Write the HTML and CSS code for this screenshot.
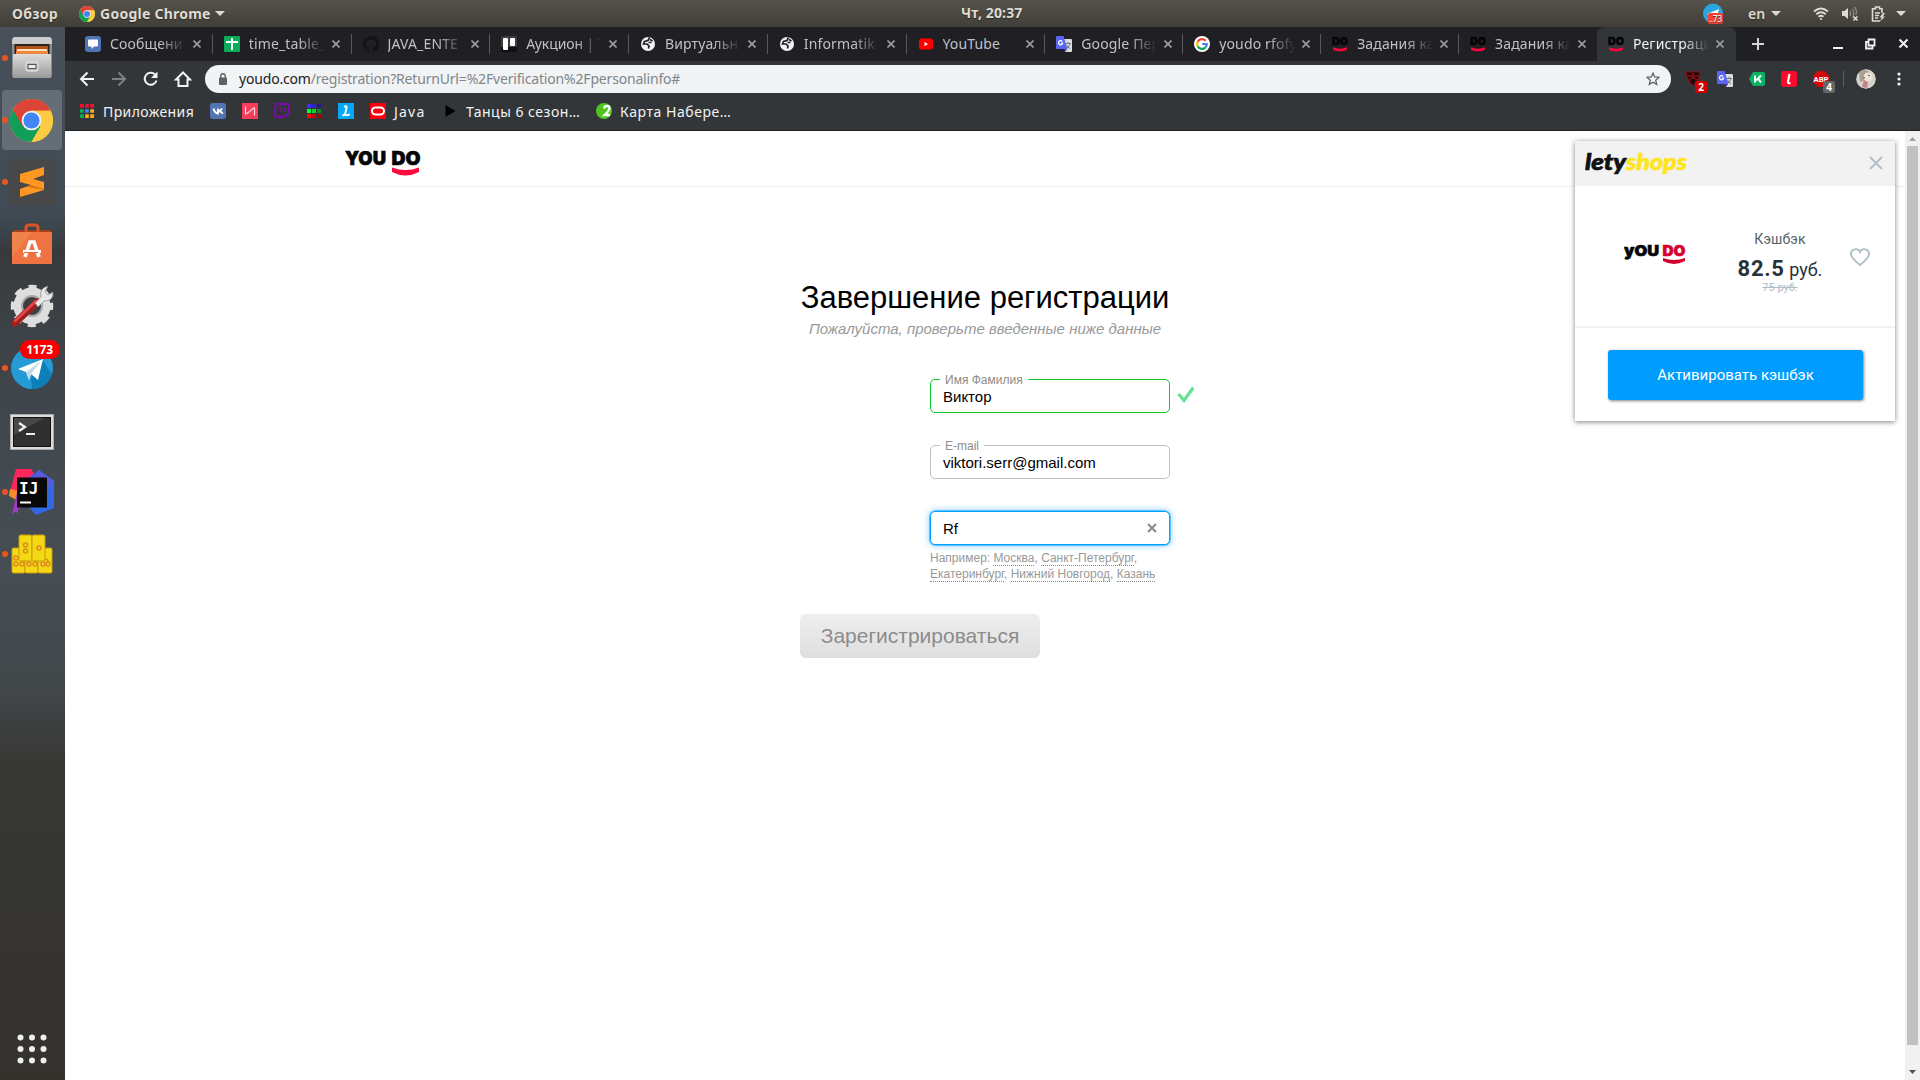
FILE: index.html
```html
<!DOCTYPE html>
<html lang="ru">
<head>
<meta charset="utf-8">
<title>Регистрация</title>
<link rel="stylesheet" href="styles.css">
</head>
<body>
<svg width="0" height="0" class="defs">
  <symbol id="chrome" viewBox="0 0 48 48">
    <circle cx="24" cy="24" r="24" fill="#fbc93c"/>
    <path d="M24 24 3.2 12A24 24 0 0 0 24 48L34.4 30z" fill="#119e58"/>
    <path d="M24 24V13H45.3A24 24 0 0 0 3.2 12L13.6 30z" fill="#db4437"/>
    <path d="M24 24 34.4 30 24 48A24 24 0 0 0 45.3 13H24z" fill="#fbcb42"/>
    <circle cx="24" cy="24" r="11" fill="#f3f3f3"/><circle cx="24" cy="24" r="9" fill="#4285f4"/>
  </symbol>
  <symbol id="close" viewBox="0 0 8 8"><path d="M.5.5l7 7M7.5.5l-7 7" stroke="currentColor" stroke-width="1.6"/></symbol>
  <symbol id="globe" viewBox="0 0 16 16"><circle cx="8" cy="8" r="7" fill="#f1f3f4"/><path d="M9.500 1.500 8 4.500 4.500 5.500 3.500 8H7l2 2-.5 2.500M10 3.500l2.500 1.500M8.500 6.500h3" stroke="#202024" stroke-width="1.700" fill="none"/></symbol>
  <symbol id="translate" viewBox="0 0 16 16"><path d="M7 3h8a1 1 0 0 1 1 1v11a1 1 0 0 1-1 1H9z" fill="#dadce0"/><path d="M9.5 7.5H15M12 6v1.5M14 8q-1 3-4 4.5M10.5 9q1 2.500 3.500 3.500" stroke="#6f7e86" fill="none"/><path d="M8 13h3l-2 3z" fill="#4527a0"/><path d="M1 0h6.500L11.500 13H1a1 1 0 0 1-1-1V1a1 1 0 0 1 1-1z" fill="#5b65f0"/><path d="M6.200 5.300A2.100 2.100 0 1 0 6.700 7H4.800" fill="none" stroke="#fff" stroke-width="1.200"/></symbol>
  <symbol id="caret" viewBox="0 0 10 5"><path d="M0 0h10L5 5z" fill="currentColor"/></symbol>
</svg>

<header class="topbar">
  <span class="overview">Обзор</span>
  <svg class="tb-chrome" width="16" height="16"><use href="#chrome"/></svg>
  <span class="appname">Google Chrome</span>
  <svg class="tb-caret" width="10" height="5"><use href="#caret"/></svg>
  <span class="clock">Чт, 20:37</span>
  <div class="tray">
    <svg width="21" height="22" viewBox="0 0 21 22"><circle cx="10" cy="10.500" r="10" fill="#2ba5e0"/><path d="M4 11 16 6l-2 8z" fill="#fff"/><rect x="5" y="10" width="15" height="11" rx="2" fill="#f44336"/><text x="6" y="19" textLength="13" class="tray-count">..73</text></svg>
    <span class="lang">en</span>
    <svg class="lang-caret" width="10" height="5"><use href="#caret"/></svg>
    <svg class="wifi" width="16" height="14" viewBox="0 0 16 14" fill="none" stroke="#dfdbd2" stroke-width="1.800"><path d="M1 4.500q7-6 14 0M3.300 7.200q4.700-4 9.400 0M5.500 9.700q2.500-2 5 0"/><circle cx="8" cy="12" r="1.100" fill="#dfdbd2" stroke="none"/></svg>
    <svg class="vol" width="18" height="16" viewBox="0 0 18 16" fill="none"><path d="M1 5h2.500L7 2v11L3.500 10H1z" fill="#dfdbd2"/><path d="M9 5q1.500 2.500 0 5M11.500 3q2.500 4.500 0 9M13.500 1q3 4 1.500 8" stroke="#8b8880" stroke-width="1.300"/><path d="M12.500 10.500l4 4m0-4l-4 4" stroke="#dfdbd2" stroke-width="1.700"/></svg>
    <svg class="bat" width="15" height="16" viewBox="0 0 15 16" fill="none" stroke="#dfdbd2" stroke-width="1.600"><path d="M11 7V2.800H8.500V1h-4v1.800H1.500V15H9M4 7h5M4 9.500h4M4 12h3"/><path d="M12 7 8.500 11.500h2.200L9 15.500l5-5h-2.200L14 7z" fill="#dfdbd2" stroke="none"/></svg>
    <svg width="10" height="5"><use href="#caret"/></svg>
  </div>
</header>

<div class="desktop">
<nav class="dock">
  <div class="app run"><svg width="42" height="44" viewBox="0 0 42 44"><defs><linearGradient id="gr" x2="0" y2="1"><stop stop-color="#ddd"/><stop offset="1" stop-color="#999"/></linearGradient></defs><rect x="1" y="1" width="40" height="41" rx="3" fill="#8f8f8f"/><path d="M4 1h34q2 0 3 4v3H1V5q1-4 3-4z" fill="#ccc"/><rect x="3.500" y="8" width="35" height="11" fill="#292420"/><path d="M5 10h32v8H5z" fill="#b5541c"/><path d="M6 13h30v2H6z" fill="#ffe0bd"/><path d="M5 15h32v4H5z" fill="#ef8740"/><rect x="2" y="18" width="38" height="24" rx="1" fill="url(#gr)"/><rect x="15" y="26" width="12" height="9" rx="2" fill="#bbb" stroke="#eee"/><rect x="17" y="28.500" width="8" height="4" fill="#eee" stroke="#555"/></svg></div>
  <div class="app run current"><svg width="43" height="43"><use href="#chrome"/></svg></div>
  <div class="app run"><svg width="46" height="46" viewBox="0 0 46 46"><rect width="46" height="46" rx="3" fill="#484848"/><path d="M11 15 35 8v8l-11 4 11 3v8L11 38v-8l11-4-11-3z" fill="#ff9822"/><path d="M22 26 35 30v1L18 28z" fill="#d87911"/></svg></div>
  <div class="app"><svg width="42" height="42" viewBox="0 0 42 42"><path d="M2 7h38v4H2z" fill="#a6401c"/><path d="M15 11V5q0-3 3-3h6q3 0 3 3v6" fill="none" stroke="#dc5425" stroke-width="3"/><path d="M1 9h40v32H1z" fill="#ee7340"/><path d="M1 9h20L1 35z" fill="#f49254" opacity=".5"/><path d="M14 34 19 19h4l5 15" fill="none" stroke="#fff" stroke-width="3.600"/><path d="M12 28.500h18" stroke="#fff" stroke-width="3"/><path d="M13 29.500h14" stroke="#e86a34"/></svg></div>
  <div class="app"><svg width="44" height="44" viewBox="0 0 44 44"><circle cx="22" cy="22" r="14" fill="none" stroke="#dedede" stroke-width="9"/><circle cx="22" cy="22" r="19" fill="none" stroke="#dedede" stroke-width="4.500" stroke-dasharray="8 6.920" stroke-dashoffset="4"/><circle cx="22" cy="22" r="10" fill="none" stroke="#aaa" stroke-width="2"/><path d="M5 39 27 18" stroke="#a51e1e" stroke-width="7" stroke-linecap="round"/><path d="M5 37 26 17" stroke="#e04a48" stroke-width="2.500" stroke-linecap="round"/><path d="M25 19 31 13q-2-9 7-11l-3 6 3 3 5-3q1 9-9 9l-6 6z" fill="#e8e8e8" stroke="#888" stroke-width=".7"/></svg></div>
  <div class="app run"><svg width="42" height="42" viewBox="0 0 42 42"><circle cx="21" cy="21" r="21" fill="#249bd5"/><path d="M20 32l10-21 11 16q-5 15-20 15z" fill="#0c7fbb"/><path d="M7 22 32 12 27 33 20 27l-2 6-3-8z" fill="#fff"/><path d="M15 25 30 14 20 27l-2 6z" fill="#c4d9e8"/></svg><span class="count">1173</span></div>
  <div class="app term"><svg width="44" height="36" viewBox="0 0 44 36"><rect x=".5" y=".5" width="43" height="35" fill="#ddd" stroke="#aaa"/><rect x="3.500" y="3.500" width="37" height="29" fill="#303030" stroke="#111"/><path d="M4 4h30L4 21z" fill="#484848"/><path d="M9 9l6 4-6 4" stroke="#eee" stroke-width="2.200" fill="none"/><path d="M16 20h9" stroke="#eee" stroke-width="2"/></svg></div>
  <div class="app run"><svg width="46" height="46" viewBox="0 0 46 46"><path d="M7 0h15l8 12v15H0z" fill="#fb275c"/><path d="M1 20l10 2v11L0 27z" fill="#f9892a"/><path d="M9 20v24l-5-2 2-10z" fill="#a437c2"/><path d="M8 30h16L3 45z" fill="#a13bc8"/><path d="M30 1l15 11v27L27 46 18 36V10z" fill="#3068e8"/><path d="M30 1l15 11-8 12V10H22z" fill="#565bd9"/><rect x="8" y="8.500" width="30" height="30" fill="#080808"/><text x="10" y="25" class="ij">IJ</text><path d="M11 33.500h11" stroke="#fff" stroke-width="2"/></svg></div>
  <div class="app run"><svg width="42" height="40" viewBox="0 0 42 40"><g fill="#f3d913" stroke="#c99b12"><rect x="1" y="14" width="13" height="25" rx="1.500"/><rect x="14" y="14" width="13" height="25" rx="1.500"/><rect x="27" y="14" width="14" height="25" rx="1.500"/><rect x="8" y="1" width="13" height="26" rx="1.500"/><rect x="21" y="1" width="13" height="26" rx="1.500"/></g><g fill="none" stroke="#e08a1c" stroke-width="1.500"><circle cx="14.500" cy="11" r="2"/><circle cx="14.500" cy="17" r="2"/><circle cx="28" cy="14" r="2"/><circle cx="5" cy="24" r="2"/><circle cx="5" cy="30" r="2"/><circle cx="11" cy="30" r="2"/><circle cx="18" cy="30" r="2"/><circle cx="24" cy="30" r="2"/><circle cx="32" cy="30" r="2"/><circle cx="37" cy="30" r="2"/><path d="M34 26q3-2 3 2"/></g></svg></div>
  <svg class="apps-grid" width="30" height="30" viewBox="0 0 30 30" fill="#f0efeb"><circle cx="3.500" cy="3.500" r="3"/><circle cx="15" cy="3.500" r="3"/><circle cx="26.500" cy="3.500" r="3"/><circle cx="3.500" cy="15" r="3"/><circle cx="15" cy="15" r="3"/><circle cx="26.500" cy="15" r="3"/><circle cx="3.500" cy="26.500" r="3"/><circle cx="15" cy="26.500" r="3"/><circle cx="26.500" cy="26.500" r="3"/></svg>
</nav>

<div class="browser">
  <div class="tabs">
    <div class="tab wide"><svg class="ico" viewBox="0 0 16 16"><rect width="16" height="16" rx="3" fill="#5074b4"/><path d="M4 3.500h8a1 1 0 0 1 1 1v5a1 1 0 0 1-1 1H9L6.500 13v-2.500H4a1 1 0 0 1-1-1v-5a1 1 0 0 1 1-1z" fill="#fff"/></svg><span class="name">Сообщени</span><svg class="x"><use href="#close"/></svg></div>
    <div class="tab wide"><svg class="ico" viewBox="0 0 16 16"><rect width="16" height="16" rx="1" fill="#0cab5a"/><path d="M2 5h5V2h2v3h5v2H9v7H7V7H2z" fill="#fff"/></svg><span class="name">time_table_</span><svg class="x"><use href="#close"/></svg></div>
    <div class="tab wide"><svg class="ico" viewBox="0 0 16 16"><path fill="#121316" d="M8 0C3.580 0 0 3.580 0 8c0 3.540 2.290 6.530 5.470 7.590.4.070.55-.17.55-.38 0-.19-.01-.82-.01-1.490-2.010.37-2.530-.49-2.690-.94-.09-.23-.48-.94-.82-1.130-.28-.15-.68-.52-.01-.53.63-.01 1.080.58 1.230.82.72 1.210 1.870.87 2.330.66.07-.52.28-.87.51-1.070-1.780-.2-3.640-.89-3.640-3.950 0-.87.31-1.590.82-2.150-.08-.2-.36-1.020.08-2.120 0 0 .67-.21 2.200.82.64-.18 1.320-.27 2-.27s1.360.09 2 .27c1.530-1.040 2.200-.82 2.200-.82.44 1.100.16 1.920.08 2.120.51.56.82 1.270.82 2.150 0 3.070-1.870 3.750-3.650 3.950.29.25.54.73.54 1.480 0 1.070-.01 1.930-.01 2.200 0 .21.15.46.55.38A8 8 0 0 0 16 8c0-4.420-3.580-8-8-8z"/></svg><span class="name">JAVA_ENTE</span><svg class="x"><use href="#close"/></svg></div>
    <div class="tab wide"><svg class="ico" viewBox="0 0 16 16"><rect width="16" height="16" rx="2" fill="#3d3d3d"/><path d="M0 11h16v5H0z" fill="#111"/><rect x="2" y="2" width="5" height="12" rx="1" fill="#fff"/><rect x="9" y="2" width="5" height="8" rx="1" fill="#fff"/></svg><span class="name tight">Аукцион | T</span><svg class="x"><use href="#close"/></svg></div>
    <div class="tab wide"><svg class="ico"><use href="#globe"/></svg><span class="name">Виртуальн</span><svg class="x"><use href="#close"/></svg></div>
    <div class="tab wide"><svg class="ico"><use href="#globe"/></svg><span class="name">Informatik</span><svg class="x"><use href="#close"/></svg></div>
    <div class="tab wide"><svg class="ico" viewBox="0 0 16 16"><rect x="1" y="2.500" width="14" height="11" rx="2.500" fill="#f00"/><path d="M6.500 6v4.200L10 8.100z" fill="#fff"/></svg><span class="name plain">YouTube</span><svg class="x"><use href="#close"/></svg></div>
    <div class="tab"><svg class="ico"><use href="#translate"/></svg><span class="name">Google Пер</span><svg class="x"><use href="#close"/></svg></div>
    <div class="tab"><svg class="ico" viewBox="0 0 16 16"><circle cx="8" cy="8" r="8" fill="#fff"/><g fill="none" stroke-width="2.200"><path d="M11.600 4.800A4.900 4.900 0 0 0 3.700 5.600" stroke="#ea4335"/><path d="M3.700 5.600a4.900 4.900 0 0 0 0 4.800" stroke="#fbbc05"/><path d="M3.700 10.400a4.900 4.900 0 0 0 7.600 1.200" stroke="#0fa855"/><path d="M11.300 11.600A4.900 4.900 0 0 0 12.800 8H8.200" stroke="#4285f4"/></g></svg><span class="name">youdo rfofy</span><svg class="x"><use href="#close"/></svg></div>
    <div class="tab"><svg class="ico" viewBox="0 0 16 16"><text x="0" y="9" textLength="16" lengthAdjust="spacingAndGlyphs" class="do-letter">DO</text><path d="M1 11.300q7 2.700 14 0v1.900q-1.500 2-7 2t-7-2z" fill="#f8063c"/></svg><span class="name">Задания ка</span><svg class="x"><use href="#close"/></svg></div>
    <div class="tab last"><svg class="ico" viewBox="0 0 16 16"><text x="0" y="9" textLength="16" lengthAdjust="spacingAndGlyphs" class="do-letter">DO</text><path d="M1 11.300q7 2.700 14 0v1.900q-1.500 2-7 2t-7-2z" fill="#f8063c"/></svg><span class="name">Задания ка</span><svg class="x"><use href="#close"/></svg></div>
    <div class="tab active"><svg class="ico" viewBox="0 0 16 16"><text x="0" y="9" textLength="16" lengthAdjust="spacingAndGlyphs" class="do-letter">DO</text><path d="M1 11.300q7 2.700 14 0v1.900q-1.500 2-7 2t-7-2z" fill="#f8063c"/></svg><span class="name">Регистраци</span><svg class="x"><use href="#close"/></svg></div>
    <svg class="newtab" width="12" height="12" viewBox="0 0 12 12"><path d="M6 0v12M0 6h12" stroke="#d5d6d8" stroke-width="2"/></svg>
    <svg class="winbtns" width="76" height="12" viewBox="0 0 76 12" fill="none" stroke="#f0f1f2"><path d="M0 10h10" stroke-width="2"/><path d="M35.500 1.500h6v6h-6zM35 4h-2v6.500h6.500V8" stroke-width="1.800"/><path d="M66.500 1.500l8 8M74.500 1.500l-8 8" stroke-width="2"/></svg>
  </div>

  <div class="toolbar">
    <svg class="nav" width="118" height="18" viewBox="0 0 118 18" fill="none" stroke="#f1f3f4" stroke-width="2"><path d="M15 9H2.500M8.500 2.500 2 9l6.500 6.500"/><path d="M33 9h12.500M39.500 2.500 46 9l-6.500 6.500" stroke="#7d8084"/><path d="M76 4.500A6 6 0 1 0 77.500 10.500"/><path d="M78.500 1.500V8H72z" fill="#f1f3f4" stroke="none"/><path d="M97 9.500H99.500V16h9V9.500h2.500l-7-7z"/></svg>
    <div class="omnibox">
      <svg width="8" height="12" viewBox="0 0 8 12"><rect y="4.500" width="8" height="7.500" rx="1" fill="#5f6368"/><path d="M1.800 5V3a2.200 2.200 0 0 1 4.400 0v2" fill="none" stroke="#5f6368" stroke-width="1.400"/></svg>
      <span class="url"><b>youdo.com</b>/registration?ReturnUrl=%2Fverification%2Fpersonalinfo#</span>
      <svg class="star" width="14" height="14" viewBox="0 0 14 14"><path d="M7 1.200 8.700 5l4.200.4-3.200 2.800 1 4.200L7 10.200l-3.700 2.200 1-4.200L1.100 5.400 5.300 5z" fill="none" stroke="#5f6368" stroke-width="1.300"/></svg>
    </div>
    <div class="exts">
      <div class="ext"><svg class="ico" viewBox="0 0 16 16" fill="none" stroke="#8c0c12" stroke-width="1.100"><path d="M1 1h14l-2 8-5 6-5-6z" fill="#18080a"/><path d="M3 4l10 5M13 4 3 9M8 2 4 12M8 2l4 10M1 5h14"/></svg><span class="badge red">2</span></div>
      <div class="ext"><svg class="ico"><use href="#translate"/></svg></div>
      <div class="ext"><svg class="ico" viewBox="0 0 16 16"><path d="M4 1h10q2 0 2 2v10q0 2-2 2H4L0 8z" fill="#0bb266"/><path d="M6 4.500v7M12 4.500l-5 5M9 7.500l3 4" stroke="#fff" stroke-width="2"/></svg></div>
      <div class="ext"><svg class="ico" viewBox="0 0 16 16"><rect width="16" height="16" rx="3" fill="#fa0a2d"/><path d="M8.500 3 7 10.500q-.3 2 2.500 1.700" fill="none" stroke="#fff" stroke-width="2.200"/></svg></div>
      <div class="ext"><svg class="ico" viewBox="0 0 16 16"><path d="M4.700 0h6.600L16 4.700v6.600L11.300 16H4.700L0 11.300V4.700z" fill="#d4060d"/><text x="0.500" y="10.700" textLength="15" lengthAdjust="spacingAndGlyphs" class="abp">ABP</text></svg><span class="badge grey">4</span></div>
    </div>
    <svg class="avatar" width="20" height="20" viewBox="0 0 20 20"><circle cx="10" cy="10" r="10" fill="#d8d3ca"/><path d="M3 3q5-5 10 0l-3 8-6 2z" fill="#aaa18f"/><circle cx="12" cy="8" r="4.500" fill="#eee3d9"/><path d="M8 11l4 2-1 6-5-1z" fill="#c6818a"/><path d="M7 8l2 1M12 6l2 1" stroke="#5c4c45"/></svg>
    <svg class="menu" width="4" height="14" viewBox="0 0 4 14" fill="#f1f3f4"><circle cx="2" cy="2" r="1.600"/><circle cx="2" cy="7" r="1.600"/><circle cx="2" cy="12" r="1.600"/></svg>
  </div>

  <div class="bookmarks">
    <svg class="apps" width="14" height="14" viewBox="0 0 14 14"><path d="M0 0h4v4H0zM5 0h4v4H5zM10 0h4v4h-4z" fill="#ee1132"/><path d="M0 5h4v4H0z" fill="#0cab5a"/><path d="M5 5h4v4H5z" fill="#4285f4"/><path d="M10 5h4v4h-4zM5 10h4v4H5zM10 10h4v4h-4z" fill="#f9ab18"/><path d="M0 10h4v4H0z" fill="#0cab5a"/><path d="M4.500 0v14M9.500 0v14M0 4.500h14M0 9.500h14" stroke="#323639" stroke-width="1.400"/></svg>
    <span class="b-apps">Приложения</span>
    <svg class="ico" viewBox="0 0 16 16"><rect width="16" height="16" rx="2.500" fill="#5074b4"/><path d="M3.500 5.500q1 4.500 4.500 5v-5M8 8.300q2.500-.3 4-2.800M8.800 8q2.500.5 4 2.700" stroke="#fff" stroke-width="1.900" fill="none"/></svg>
    <svg class="ico" viewBox="0 0 16 16"><rect width="16" height="16" fill="#f93c59"/><path d="M3.500 3.500v7.500h1L11.500 5h1v7.500" fill="none" stroke="#ffdce2" stroke-width="1.200"/></svg>
    <svg class="ico" viewBox="0 0 16 16"><path d="M2 1h13v9l-3.500 3.500H8.500L6.500 15v-1.500H1.200V4z" fill="none" stroke="#7a0ba8" stroke-width="2"/><path d="M7 4.500v4M11 4.500v4" stroke="#7a0ba8" stroke-width="1.700"/></svg>
    <svg class="ico" viewBox="0 0 16 16"><path d="M1 1h4v4H1z" fill="#3a32f2"/><path d="M6 1h4v4H6z" fill="#2e25c4"/><path d="M11 1h4v4h-4z" fill="#201899"/><path d="M1 6h4v4H1z" fill="#0bfa3b"/><path d="M6 6h4v4H6z" fill="#06d72d"/><path d="M11 6h4v4h-4z" fill="#078d20"/><path d="M1 11h4v4H1z" fill="#f90808"/><path d="M6 11h4v4H6z" fill="#c40606"/><path d="M11 11h4v4h-4z" fill="#a30505"/></svg>
    <svg class="ico" viewBox="0 0 16 16"><rect width="16" height="16" fill="#04a9f5"/><path d="M6 4q3-2 2.500 1L6.800 12q2 .500 5-.5M4.500 12.500l3-1" fill="none" stroke="#fff" stroke-width="1.900"/></svg>
    <svg class="ico" viewBox="0 0 16 16"><rect width="16" height="16" fill="#f8000c"/><rect x="2" y="4.500" width="12" height="7" rx="3.500" fill="none" stroke="#fff" stroke-width="2"/></svg>
    <span class="b-java">Java</span>
    <svg class="play" width="11" height="12" viewBox="0 0 11 12"><path d="M.5 0 10.500 6 .5 12z" fill="#000"/></svg>
    <span class="b-dance">Танцы 6 сезон…</span>
    <svg class="ico" viewBox="0 0 16 16"><circle cx="8" cy="8" r="8" fill="#51c31e"/><path d="M8 5.500Q8.500 3 11 3t2.500 2.300Q13.500 7.500 8.500 12H14" fill="none" stroke="#fff" stroke-width="2.300"/></svg>
    <span class="b-map">Карта Набере…</span>
  </div>

  <div class="view">
    <main class="page">
      <div class="site-head">
        <svg width="76" height="28" viewBox="0 0 76 28"><text x="0" y="15" textLength="41" lengthAdjust="spacingAndGlyphs" class="brand">YOU</text><text x="46.500" y="15" textLength="29" lengthAdjust="spacingAndGlyphs" class="brand">DO</text><path d="M47 17.500q13.500 5 27 0v4.500q-13.500 7-27 0z" fill="#ff0a3c"/></svg>
      </div>
      <div class="form">
        <h1>Завершение регистрации</h1>
        <p class="sub">Пожалуйста, проверьте введенные ниже данные</p>
        <div class="field ok"><label>Имя Фамилия</label><span>Виктор</span><svg class="tick" width="18" height="17" viewBox="0 0 18 17"><path d="M1.500 8 7 14.500 16.300 1.500" fill="none" stroke="#65e495" stroke-width="3.200"/></svg></div>
        <div class="field"><label>E-mail</label><span>viktori.serr@gmail.com</span></div>
        <div class="field focus"><span>Rf</span><svg width="10" height="10" viewBox="0 0 10 10"><path d="M1 1l8 8M9 1l-8 8" stroke="#8f8f8f" stroke-width="2.200"/></svg></div>
        <p class="hint">Например: <a>Москва</a>, <a>Санкт-Петербург</a>, <a>Екатеринбург</a>, <a>Нижний Новгород</a>, <a>Казань</a></p>
        <button>Зарегистрироваться</button>
      </div>
      <aside class="popup">
        <div class="pop-head">
          <svg width="104" height="26" viewBox="0 0 104 26"><text x="0" y="20" textLength="41" lengthAdjust="spacingAndGlyphs" class="lety">lety</text><text x="41" y="20" textLength="61" lengthAdjust="spacingAndGlyphs" class="lety shops">shops</text></svg>
          <svg width="14" height="14" viewBox="0 0 14 14"><path d="M1 1l12 12M13 1 1 13" stroke="#b0bec5" stroke-width="1.800"/></svg>
        </div>
        <div class="pop-body">
          <svg class="pop-logo" width="62" height="22" viewBox="0 0 62 22"><text x="0" y="12" textLength="35" lengthAdjust="spacingAndGlyphs" class="brand small">yOU</text><text x="38.500" y="12" textLength="23" lengthAdjust="spacingAndGlyphs" class="brand small crimson">DO</text><path d="M39 14q11 4 22 0v3q-11 6-22 0z" fill="#d5002f"/></svg>
          <div class="cash"><span class="c1">Кэшбэк</span><span class="c2"><b>82.5</b> руб.</span><s>75 руб.</s></div>
          <svg class="heart" width="20" height="19" viewBox="0 0 20 19"><path d="M10 17Q1 10 1 6a4.700 4.700 0 0 1 9-2 4.700 4.700 0 0 1 9 2q0 4-9 11z" fill="none" stroke="#b0bec5" stroke-width="1.900"/></svg>
        </div>
        <div class="pop-foot"><div class="activate">Активировать кэшбэк</div></div>
      </aside>
    </main>
    <div class="scroll"><svg width="7" height="4" viewBox="0 0 7 4"><path d="M0 4h7L3.500 0z" fill="#a0a0a0"/></svg><i></i><svg width="7" height="4" viewBox="0 0 7 4"><path d="M0 0h7L3.500 4z" fill="#505050"/></svg></div>
  </div>
</div>
</div>
</body>
</html>
```
FILE: styles.css
```css
* { box-sizing: border-box; }
body { margin: 0; width: 1920px; height: 1080px; overflow: hidden; display: flex; flex-direction: column; font-family: "Noto Sans", sans-serif; background: #fff; }
svg { display: block; flex: none; }
.defs { position: absolute; }
.ico { width: 16px; height: 16px; }

/* System bar */
.topbar { height: 27px; flex: none; display: flex; align-items: center; padding-left: 12px; background: linear-gradient(#57534b, #403e38); color: #dfdbd2; font-weight: 700; font-size: 14px; white-space: nowrap; text-shadow: 0 1px 1px #2a2926; }
.overview { width: 67px; letter-spacing: .3px; }
.appname { width: 110px; margin-left: 5px; letter-spacing: .25px; }
.tb-caret { margin-left: 5px; }
.clock { width: 63px; margin: -2px 0 0 736px; font-size: 14px; letter-spacing: .15px; }
.tray { display: flex; align-items: center; margin-left: 679px; }
.tray-count { font: 8.500px "Noto Sans", sans-serif; fill: #fff; }
.lang { margin-left: 24px; width: 18px; font-weight: 600; }
.lang-caret { margin-left: 5px; }
.wifi { margin-left: 32px; }
.vol { margin-left: 12px; }
.bat { margin: 0 10px 0 12px; }

/* Launcher */
.desktop { display: flex; flex: 1; min-height: 0; }
.dock { width: 65px; flex: none; display: flex; flex-direction: column; align-items: center; padding-top: 1px; background: linear-gradient(#48515a 0, #404b55 185px, #3b4349 205px, #37393b 225px, #3d4247 300px, #424950 440px, #464d53 540px, #42474a 660px, #373734 740px, #34322d 100%); }
.app { position: relative; width: 60px; height: 60px; margin: 0 2px 2px 0; display: flex; align-items: center; justify-content: center; border-radius: 4px; }
.app.current { background: #656d75; }
.app.term { padding-top: 3px; }
.run::before { content: ""; position: absolute; left: 0; top: 27px; width: 6px; height: 6px; border-radius: 50%; background: #e95420; }
.count { position: absolute; left: 18px; top: 2px; width: 40px; height: 19px; border-radius: 10px; background: #f90000; color: #fff; font: 700 12px/19px "Noto Sans", sans-serif; text-align: center; letter-spacing: -.2px; }
.ij { font: 700 16px "DejaVu Sans Mono", monospace; fill: #fff; }
.apps-grid { margin: auto 1px 16px 0; }

/* Browser chrome */
.browser { flex: 1; min-width: 0; display: flex; flex-direction: column; }
.tabs { height: 34px; display: flex; align-items: center; padding-left: 9px; background: #202024; }
.tab { position: relative; width: 137.950px; height: 34px; flex: none; display: flex; align-items: center; padding-left: 11px; font-size: 14px; color: #bfc1c6; }
.tab.wide { width: 138.750px; }
.tab::after { content: ""; position: absolute; right: 0; top: 7px; height: 20px; width: 1px; background: #56585c; }
.tab.last::after, .tab.active::after { display: none; }
.tab.active { width: 139px; background: #323639; color: #f1f3f4; border-radius: 8px 8px 0 0; }
.name { width: 76px; margin: -2px 0 0 9px; overflow: hidden; white-space: nowrap; letter-spacing: .15px; -webkit-mask-image: linear-gradient(90deg, #000 65%, transparent 100%); mask-image: linear-gradient(90deg, #000 65%, transparent 100%); }
.name.plain { -webkit-mask-image: none; mask-image: none; }
.name.tight { letter-spacing: -.1px; }
.x { width: 8px; height: 8px; margin-left: 7px; color: #9c9ea3; }
.newtab { margin-left: 16px; }
.winbtns { margin-left: 69px; }
.do-letter { font: 900 11px Inter, sans-serif; fill: #050505; stroke: #050505; stroke-width: .5px; }
.toolbar { height: 36px; display: flex; align-items: center; padding-left: 14px; background: #323639; }
.omnibox { width: 1466px; height: 28px; margin-left: 8px; border-radius: 14px; background: #f1f3f4; display: flex; align-items: center; padding: 0 11px 0 14px; }
.url { margin: -2px 0 0 12px; font-size: 14px; letter-spacing: -.18px; color: #80868b; }
.url b { font-weight: 400; color: #202124; }
.star { margin-left: auto; }
.exts { display: flex; gap: 16px; margin-left: 14px; padding-right: 14px; border-right: 1px solid #5b5e62; height: 16px; }
.ext { position: relative; }
.badge { position: absolute; left: 10px; top: 10px; width: 12px; height: 12px; border-radius: 2px; font: 700 10px/12px "Noto Sans", sans-serif; color: #fff; text-align: center; }
.red { background: #d40000; }
.grey { background: #666; }
.abp { font: 700 8px Roboto, sans-serif; fill: #fff; }
.avatar { margin-left: 12px; border-radius: 50%; }
.menu { margin-left: 21px; }
.bookmarks { height: 34px; display: flex; align-items: center; padding: 0 0 5px 15px; background: #323639; border-bottom: 1px solid #202124; color: #f1f3f4; font-size: 14px; letter-spacing: .4px; white-space: nowrap; }
.bookmarks .ico + .ico { margin-left: 16px; }
.b-apps { width: 107px; margin-left: 9px; }
.b-java { width: 51px; margin-left: 8px; letter-spacing: 1.200px; }
.b-dance { width: 130px; margin-left: 10px; letter-spacing: .5px; }
.b-map { margin-left: 8px; letter-spacing: .55px; }

/* Page */
.view { flex: 1; display: flex; min-height: 0; background: #fff; }
.page { position: relative; flex: 1; font-family: "Liberation Sans", Arial, sans-serif; }
.site-head { height: 56px; padding: 19px 0 0 280px; border-bottom: 1px solid #eee; }
.brand { font: 900 19px Inter, sans-serif; fill: #050505; stroke: #050505; stroke-width: .6px; }
.brand.small { font-size: 15px; }
.brand.crimson { fill: #d5002f; stroke: #d5002f; }
.form { width: 370px; margin: 92px 0 0 735px; }
h1 { margin: 0; font-size: 31px; line-height: 38px; font-weight: 400; text-align: center; color: #000; white-space: nowrap; }
.sub { margin: 2px 0 40px; font-size: 15px; line-height: 20px; font-style: italic; color: #999; text-align: center; white-space: nowrap; }
.field { position: relative; width: 240px; height: 34px; margin: 0 0 32px 130px; padding: 0 12px; border: 1px solid #c0c0c0; border-radius: 5px; display: flex; align-items: center; justify-content: space-between; font-size: 15px; color: #000; }
.field label { position: absolute; left: 9px; top: -7px; padding: 0 5px; background: #fff; font-size: 12px; line-height: 14px; color: #8c8c8c; white-space: nowrap; }
.ok { border-color: #10cb35; }
.tick { position: absolute; left: 246px; top: 6px; }
.focus { margin-bottom: 5px; border-color: #00a2ff; box-shadow: 0 0 0 .5px #00a2ff, 0 0 7px #70bfff; }
.hint { margin: 0 0 32px 130px; width: 240px; font-size: 12px; line-height: 16px; color: #999; }
.hint a { border-bottom: 1px dotted #888; }
button { display: block; width: 240px; height: 44px; padding: 0; border: 0; border-radius: 6px; background: linear-gradient(#eee, #dfdfdf); font: 21px "Liberation Sans", Arial, sans-serif; color: #8c8c8c; }

/* Cashback popup */
.popup { position: absolute; right: 10px; top: 10px; width: 320px; height: 280px; display: flex; flex-direction: column; background: #fff; box-shadow: 0 1px 5px rgba(0, 0, 0, .5); font-family: Roboto, sans-serif; color: #263238; }
.pop-head { height: 45px; flex: none; display: flex; align-items: center; justify-content: space-between; padding: 0 12px 2px 10px; background: #f2f2f2; }
.lety { font: italic 900 22px Lato, sans-serif; fill: #111; stroke: #111; stroke-width: .7px; }
.shops { fill: #ffe51e; stroke: #ffe51e; }
.pop-body { height: 142px; flex: none; display: flex; align-items: center; padding: 0 24px 0 49px; border-bottom: 2px solid #f2f2f2; }
.pop-logo { margin-bottom: 3px; }
.cash { width: 104px; margin: 12px 18px 0 42px; display: flex; flex-direction: column; align-items: center; white-space: nowrap; }
.c1 { font-size: 14px; line-height: 16px; color: #546067; letter-spacing: .1px; }
.c2 { margin-top: 9px; font-size: 18px; line-height: 26px; }
.c2 b { font-size: 22px; letter-spacing: .7px; }
.cash s { margin-top: -1px; font-size: 11px; line-height: 12px; color: #b0bec5; }
.heart { margin-top: 2px; }
.pop-foot { padding: 22px 33px 0; }
.activate { width: 255px; height: 50px; border-radius: 3px; background: #009dff; box-shadow: 1px 1px 3px rgba(0, 0, 0, .5); color: #fff; font-size: 15px; line-height: 50px; text-align: center; letter-spacing: 0; }
.scroll { width: 15px; display: flex; flex-direction: column; align-items: center; justify-content: space-between; padding: 6px 0; background: #f1f1f1; }
.scroll i { width: 11px; height: 899px; margin-bottom: 20px; background: #c1c1c1; }
```
